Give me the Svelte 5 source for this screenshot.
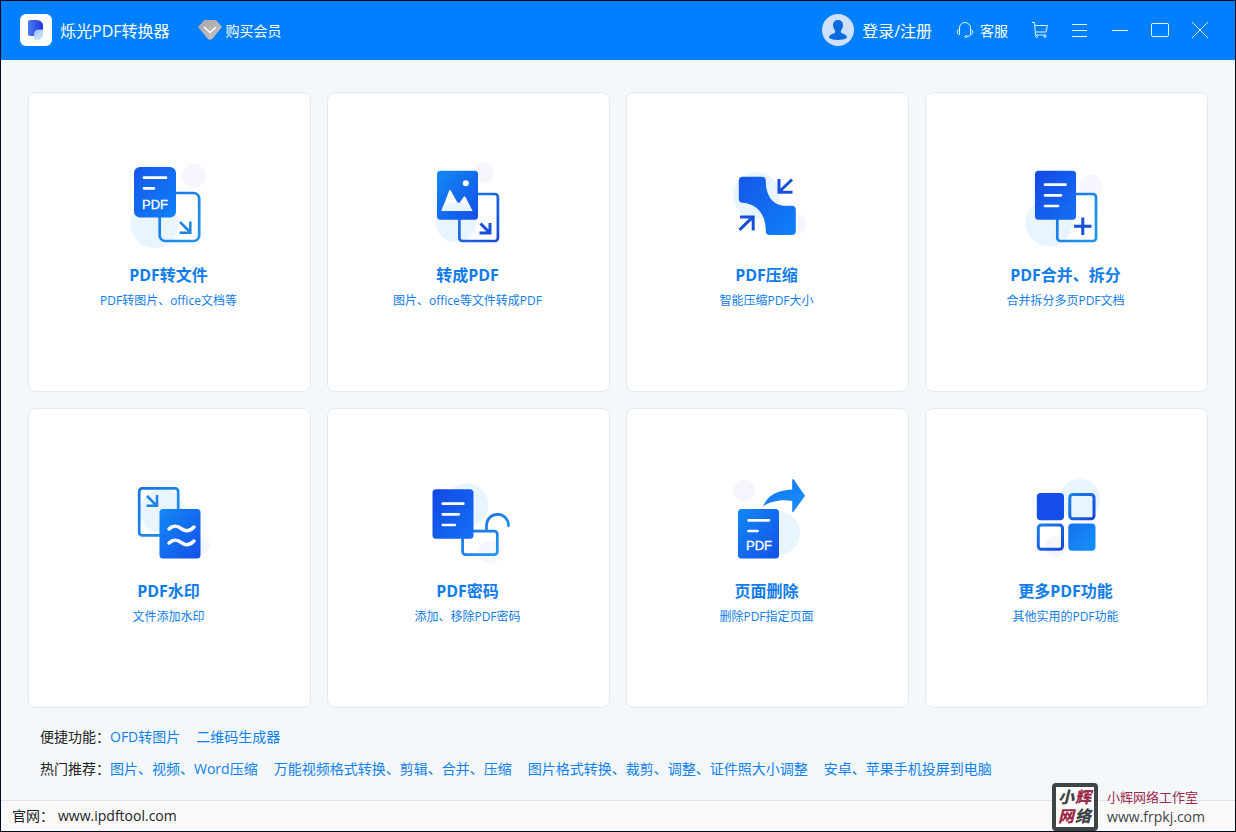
<script>
  const tools = [
    { id: 'to-file', title: 'PDF转文件', desc: 'PDF转图片、office文档等' },
    { id: 'to-pdf', title: '转成PDF', desc: '图片、office等文件转成PDF' },
    { id: 'compress', title: 'PDF压缩', desc: '智能压缩PDF大小' },
    { id: 'merge', title: 'PDF合并、拆分', desc: '合并拆分多页PDF文档' },
    { id: 'watermark', title: 'PDF水印', desc: '文件添加水印' },
    { id: 'password', title: 'PDF密码', desc: '添加、移除PDF密码' },
    { id: 'delete', title: '页面删除', desc: '删除PDF指定页面' },
    { id: 'more', title: '更多PDF功能', desc: '其他实用的PDF功能' },
  ];

  const linkRows = [
    { label: '便捷功能：', links: ['OFD转图片', '二维码生成器'] },
    {
      label: '热门推荐：',
      links: [
        '图片、视频、Word压缩',
        '万能视频格式转换、剪辑、合并、压缩',
        '图片格式转换、裁剪、调整、证件照大小调整',
        '安卓、苹果手机投屏到电脑',
      ],
    },
  ];
</script>

<!-- gradients shared by the tool icons -->
<svg class="defs" aria-hidden="true">
  <defs>
    <linearGradient id="g-light" x1="0" y1="0" x2="1" y2="1">
      <stop offset="0" stop-color="#1557e8" />
      <stop offset="1" stop-color="#0f80f8" />
    </linearGradient>
    <linearGradient id="g-dark" x1="0" y1="0" x2="1" y2="1">
      <stop offset="0" stop-color="#1288f6" />
      <stop offset="1" stop-color="#1450e8" />
    </linearGradient>
    <linearGradient id="g-deep" x1="0" y1="0" x2="1" y2="1">
      <stop offset="0" stop-color="#1248e6" />
      <stop offset="1" stop-color="#1570f4" />
    </linearGradient>
    <linearGradient id="g-line" x1="0" y1="0" x2="1" y2="1">
      <stop offset="0" stop-color="#1672e8" />
      <stop offset="1" stop-color="#2196ee" />
    </linearGradient>
    <linearGradient id="g-line-dark" x1="0" y1="0" x2="1" y2="1">
      <stop offset="0" stop-color="#1c80ea" />
      <stop offset="1" stop-color="#1648d8" />
    </linearGradient>
    <linearGradient id="g-sky" x1="0" y1="0" x2="1" y2="1">
      <stop offset="0" stop-color="#1670f0" />
      <stop offset="1" stop-color="#1592fa" />
    </linearGradient>
    <linearGradient id="g-logo" x1="0" y1="0" x2="1" y2="0">
      <stop offset="0" stop-color="#4d7cf0" />
      <stop offset="1" stop-color="#1c34e0" />
    </linearGradient>
    <linearGradient id="g-gem" x1="0" y1="0" x2="1" y2="1">
      <stop offset="0" stop-color="#a4a4a8" />
      <stop offset="1" stop-color="#c8c4c2" />
    </linearGradient>
  </defs>
</svg>

<div class="window">
  <header>
    <svg class="logo" viewBox="0 0 32 32" aria-hidden="true">
      <rect width="32" height="32" rx="6" fill="#fff" />
      <path d="M8 8q0-2 2-2h6.500q6.500 0 6.500 6.500v3q0 2-2 2l-6 4.500H10q-2 0-2-2z" fill="url(#g-logo)" />
      <path d="M14 24v-3.500q0-4.500 4.500-5h4.500v4q0 6.500-6 6.500h-1q-2 0-2-2z" fill="#b8d8ff" opacity="0.9" />
    </svg>
    <h1>烁光PDF转换器</h1>
    <button class="vip">
      <svg width="24" height="20" viewBox="0 0 24 20" aria-hidden="true">
        <path d="M6 0h12l6 7-9.500 11.500q-2.500 2.500-5 0L0 7z" fill="url(#g-gem)" />
        <path d="M6.500 7.500l5.500 5 5.500-5" fill="none" stroke="#fff" stroke-width="1.500" stroke-linecap="round" />
      </svg>
      购买会员
    </button>

    <button class="login">
      <svg width="32" height="32" viewBox="0 0 32 32" aria-hidden="true">
        <circle cx="16" cy="16" r="16" fill="#cfe0ff" />
        <path d="M16 6c3 0 5 2 5 5 0 2.500-1 4-2 5.500-.5 1.500 0 2.500 1.500 3 3 1 4.500 2 4.500 4.500-4 2.500-14 2.500-18 0 0-2.500 1.500-3.500 4.500-4.500 1.500-.5 2-1.500 1.500-3-1-1.500-2-3-2-5.500 0-3 2-5 5-5z" fill="#0a6be0" />
      </svg>
      登录/注册
    </button>
    <button class="service">
      <svg width="18" height="18" viewBox="0 0 18 18" fill="none" stroke="#e4f1ff" aria-hidden="true">
        <path d="M3.500 9V7a5.500 5.500 0 0 1 11 0v2M3.500 8.500v5c-3 0-3-5 0-5zM14.500 8.500v5c3 0 3-5 0-5zM14.500 13.500q0 2-3.500 2" />
        <circle cx="10" cy="15.500" r="1" />
      </svg>
      客服
    </button>
    <nav>
      <button aria-label="购物车">
        <svg width="18" height="18" viewBox="0 0 18 18">
          <path d="M1 1.500h2.500l1 12.500h10.500M4 4.500h12.500l-1.500 6.500H4.500" />
          <circle cx="5.500" cy="15.500" r="1" /><circle cx="14" cy="15.500" r="1" />
        </svg>
      </button>
      <button aria-label="菜单">
        <svg width="18" height="18" viewBox="0 0 18 18"><path d="M1 3.500h15M1 9.500h15M1 15.500h15" /></svg>
      </button>
      <button aria-label="最小化">
        <svg width="18" height="18" viewBox="0 0 18 18"><path d="M1 9.500h16" /></svg>
      </button>
      <button aria-label="最大化">
        <svg width="18" height="18" viewBox="0 0 18 18"><rect x=".5" y="2.500" width="17" height="13" rx="1" /></svg>
      </button>
      <button aria-label="关闭">
        <svg width="18" height="18" viewBox="0 0 18 18"><path d="M1 1l16 16M17 1L1 17" /></svg>
      </button>
    </nav>
  </header>

  <main>
    <div class="grid">
      {#each tools as tool (tool.id)}
        <button class="card">
          <svg class="icon" viewBox="0 0 100 90" aria-hidden="true">
            {#if tool.id === 'to-file'}
              <circle cx="75" cy="15.700" r="12" fill="#f6f6ff" />
              <circle cx="35.500" cy="64" r="24" fill="#e8f5ff" />
              <rect x="40.700" y="33" width="39.500" height="48" rx="5.500" class="line" stroke-width="2.200" />
              <rect x="15" y="7" width="42" height="50.500" rx="6" fill="url(#g-light)" />
              <path d="M25 17.700h22M25 28.300h10" class="white" />
              <text x="23" y="48.500">PDF</text>
              <path d="M61 62l10 10M71.300 61.500v11.200H60.500" class="arrow sky" />
            {:else if tool.id === 'to-pdf'}
              <circle cx="65" cy="13" r="10.500" fill="#f6f6ff" />
              <circle cx="38" cy="62" r="20.500" fill="#e8f5ff" />
              <rect x="41.400" y="34" width="38.500" height="47" rx="3" class="line deep" />
              <rect x="19" y="10.700" width="41" height="49" rx="3.500" fill="url(#g-dark)" />
              <path d="M23.500 51l7.500-20q1-2 2 0l7.500 13.500 5-7.500q1-1 2 0l7 14z" fill="#fff" />
              <path d="M25 46q12-7 26 0l3.500 5h-31z" fill="#e8f5ff" />
              <circle cx="47.800" cy="23.300" r="3" fill="#fff" />
              <path d="M62.500 63.500l9 9M72 63v10H61.500" class="arrow" />
            {:else if tool.id === 'compress'}
              <circle cx="39.500" cy="35.700" r="23.500" fill="#e8f5ff" />
              <circle cx="76.800" cy="64" r="12" fill="#f6f6ff" />
              <path d="M25.800 16.700h19q4 0 4 4c0 15 7 25 20 25h6q4 0 4 4v21.300q0 4-4 4h-22q-4 0-4-4c0-16-8-27-23-28.300q-4 0-4-4v-18q0-4 4-4z" fill="url(#g-light)" />
              <path d="M75 19.500L62 32M62 19v13.300h13.500M22.500 69.800l13.500-13M23 57h13.200v13.500" class="arrow" />
            {:else if tool.id === 'merge'}
              <circle cx="74.800" cy="26" r="11.500" fill="#f6f6ff" />
              <circle cx="32.800" cy="63" r="23.500" fill="#e8f5ff" />
              <rect x="41.300" y="34" width="38.700" height="47" rx="3" class="line" />
              <rect x="19" y="10.700" width="41" height="49" rx="3.500" fill="url(#g-deep)" />
              <path d="M29 24.700h20.500M29 35.300h16M29 46h13" class="white" />
              <path d="M58 66.300h17.500M66.800 57.500V75" class="arrow" />
            {:else if tool.id === 'watermark'}
              <circle cx="82" cy="69" r="9" fill="#f6f6ff" />
              <circle cx="43" cy="35" r="22" fill="#e8f5ff" />
              <rect x="20.200" y="12.400" width="39" height="47" rx="3" class="line" />
              <rect x="40.500" y="33" width="41" height="49.500" rx="3.500" fill="url(#g-dark)" />
              <path d="M50 53c5-5 9-3 13 0s8 2 12-2M50 67c5-5 9-3 13 0s8 2 12-2" class="white wave" />
              <path d="M28 20l9.500 9.500M38 19v10.800H27.500" class="arrow sky" />
            {:else if tool.id === 'password'}
              <circle cx="48.800" cy="28.700" r="21.500" fill="#e8f5ff" />
              <circle cx="71.800" cy="76.300" r="11.500" fill="#f6f6ff" />
              <rect x="44.600" y="55.200" width="34.700" height="23.500" rx="3" class="line" />
              <path d="M68.500 55v-6a11 11 0 0 1 22 .8" class="line" />
              <rect x="14.500" y="13.300" width="41" height="49.500" rx="3.500" fill="url(#g-deep)" />
              <path d="M24.800 27.700h20.500M24.800 38.300h16M24.800 49h12" class="white" />
            {:else if tool.id === 'delete'}
              <circle cx="27.500" cy="14.700" r="11" fill="#f6f6ff" />
              <circle cx="61" cy="57.300" r="22" fill="#e8f5ff" />
              <path d="M46 30.300C51 19 60 14.700 75.200 13.500V4q.5-1.500 1.500-.5L88 19.700 76.700 35.500q-1 1.500-1.500 0V25C63 23 53 26 46 30.300z" fill="url(#g-sky)" />
              <rect x="21" y="33" width="41" height="49.500" rx="3.500" fill="url(#g-dark)" />
              <path d="M31.500 44.300h20.500M31.500 55h9" class="white" />
              <text x="29" y="73.500">PDF</text>
            {:else}
              <circle cx="63.800" cy="23.300" r="20.500" fill="#e8f5ff" />
              <circle cx="39.500" cy="70.700" r="11" fill="#f6f6ff" />
              <rect x="20.800" y="17" width="27.200" height="27.200" rx="4" fill="#154de9" />
              <rect x="53.800" y="18.500" width="24.200" height="24.200" rx="3" class="line deep thick" />
              <rect x="22.300" y="49" width="24.200" height="24.200" rx="3" class="line deep thick" />
              <rect x="52.300" y="47.500" width="27.200" height="27.200" rx="4" fill="url(#g-sky)" />
            {/if}
          </svg>
          <strong>{tool.title}</strong>
          <span>{tool.desc}</span>
        </button>
      {/each}
    </div>

    <section class="links">
      {#each linkRows as row}
        <div class="row">
          <span class="label">{row.label}</span>
          {#each row.links as link}
            <a href="#top">{link}</a>
          {/each}
        </div>
      {/each}
    </section>
  </main>

  <footer>
    <span>官网：</span>
    <a href="#site">www.ipdftool.com</a>
  </footer>

  <div class="studio">
    <div class="stamp">
      <span>小</span><span class="red">辉</span><span class="red">网</span><span>络</span>
    </div>
    <div class="studio-text">
      <span class="red">小辉网络工作室</span>
      <span class="url">www.frpkj.com</span>
    </div>
  </div>
</div>

<style>
  :global(body) {
    background: #f4f8fa;
  }

  .defs {
    position: absolute;
    width: 0;
    height: 0;
  }

  .window {
    position: relative;
    box-sizing: border-box;
    min-height: 100vh;
    display: flex;
    flex-direction: column;
    border: 1px solid #000c1c;
    background: #f4f8fa;
    color: #222;
    font-family: "Open Sans", "Noto Sans CJK SC", sans-serif;
    font-size: 14px;
    overflow: hidden;
  }

  button {
    font: inherit;
    color: inherit;
    background: none;
    border: none;
    padding: 0;
    cursor: pointer;
  }

  a {
    color: inherit;
    text-decoration: none;
  }

  header {
    box-sizing: border-box;
    display: flex;
    align-items: center;
    height: 59px;
    padding: 0 15px 2px 19px;
    background: #007fff;
    color: #fff;
  }

  h1 {
    margin: 0 28px 0 8px;
    font-size: 16px;
    font-weight: 400;
  }

  .logo {
    width: 32px;
    height: 32px;
  }

  .vip,
  .login,
  .service {
    display: flex;
    align-items: center;
    gap: 4px;
  }

  .login {
    gap: 8px;
    margin-left: auto;
    font-size: 16px;
  }

  .service {
    gap: 6px;
    margin: 0 12px 0 24px;
  }

  nav {
    display: flex;
  }

  nav button {
    display: flex;
    justify-content: center;
    width: 40px;
  }

  nav svg {
    fill: none;
    stroke: #e4f1ff;
  }

  main {
    flex: 1;
    display: flex;
    flex-direction: column;
    padding: 32px 27px 15px;
  }

  .grid {
    flex: 1;
    display: grid;
    grid-template-columns: repeat(4, 1fr);
    grid-auto-rows: 1fr;
    gap: 16px;
  }

  .card {
    display: flex;
    flex-direction: column;
    align-items: center;
    justify-content: center;
    padding: 0 2px 13px 0;
    border: 1px solid #e2eaf0;
    border-radius: 8px;
    background: #fff;
    color: #0f7ceb;
  }

  .card strong {
    margin: 13px 0 4px;
    font-size: 16px;
    line-height: 24px;
  }

  .card span {
    font-size: 12px;
    line-height: 20px;
  }

  .icon {
    width: 100px;
    height: 90px;
  }

  .icon text {
    font: 13px "Liberation Sans", sans-serif;
    fill: #fff;
    stroke: #fff;
    stroke-width: 0.3;
  }

  .line {
    fill: none;
    stroke: url(#g-line);
    stroke-width: 2.7;
    stroke-linecap: round;
  }

  .deep {
    stroke: url(#g-line-dark);
  }

  .thick {
    stroke-width: 3;
  }

  .white {
    fill: none;
    stroke: #fff;
    stroke-width: 2.7;
    stroke-linecap: round;
  }

  .wave {
    stroke-width: 3.5;
  }

  .arrow {
    fill: none;
    stroke: #1650dc;
    stroke-width: 3;
  }

  .arrow.sky {
    stroke: #1f84e4;
    stroke-width: 2.5;
  }

  .links {
    margin-top: 13px;
    padding-left: 12px;
  }

  .row {
    display: flex;
    flex-wrap: wrap;
    column-gap: 16px;
    line-height: 32px;
  }

  .row a {
    color: #0f80f0;
  }

  .label {
    width: 70px;
    margin-right: -16px;
  }

  footer {
    display: flex;
    gap: 4px;
    padding: 0 11px;
    border-top: 1px solid #e4e4e6;
    background: #f9f9fa;
    line-height: 30px;
  }

  /* studio mark lies over the bottom right corner */
  .studio {
    position: absolute;
    right: 30px;
    bottom: 0;
    display: flex;
    align-items: center;
    gap: 9px;
    color: #3f4446;
  }

  .stamp {
    box-sizing: border-box;
    display: grid;
    grid-template-columns: 17px 17px;
    justify-content: center;
    align-content: center;
    width: 46px;
    height: 48px;
    border: 4px solid #3f4446;
    border-radius: 4px;
    background: #fff;
    font-family: "Liberation Sans", "Noto Sans CJK SC", sans-serif;
    font-size: 16px;
    font-weight: 900;
    font-style: italic;
    line-height: 19px;
  }

  .studio-text {
    display: flex;
    flex-direction: column;
    font-size: 13px;
    line-height: 20px;
  }

  .url {
    font-size: 14px;
  }

  .red {
    color: #9c2b4b;
  }
</style>
